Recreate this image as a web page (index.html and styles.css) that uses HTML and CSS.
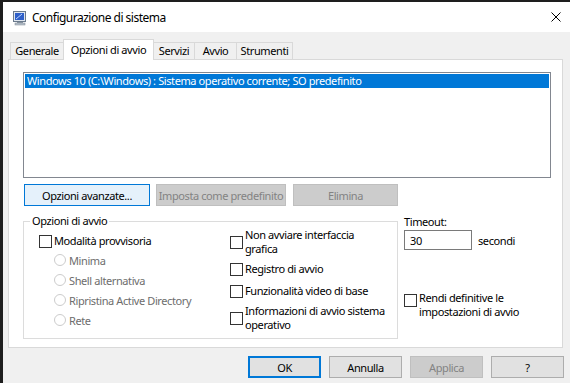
FILE: index.html
```html
<!DOCTYPE html>
<html lang="it">
<head>
  <meta charset="UTF-8">
  <title>Configurazione di sistema</title>
  <link rel="stylesheet" href="styles.css">
</head>
<body>
  <div class="window">
    <div class="titlebar">
      <svg class="app-icon" width="16" height="16" viewBox="0 0 16 16">
        <rect x="1.5" y="1.5" width="12" height="10" fill="#dfe6ee" stroke="#6b7a8c"/>
        <rect x="3" y="3" width="9" height="7" fill="#2f5fc8"/>
        <path d="M4 9 L10 4" stroke="#bcd4ff" stroke-width="1"/>
        <rect x="5" y="12" width="6" height="1" fill="#8a96a3"/>
        <rect x="3" y="13" width="10" height="2" fill="#b9c2cc" stroke="#7d8895" stroke-width="0.5"/>
      </svg>
      <span class="title">Configurazione di sistema</span>
      <svg class="close" width="10" height="10" viewBox="0 0 10 10">
        <path d="M0.5 0.5 L9.5 9.5 M9.5 0.5 L0.5 9.5" stroke="#000" stroke-width="1"/>
      </svg>
    </div>

    <div class="tabs">
      <div class="tab tab-generale">Generale</div>
      <div class="tab tab-active">Opzioni di avvio</div>
      <div class="tab tab-servizi">Servizi</div>
      <div class="tab tab-avvio">Avvio</div>
      <div class="tab tab-strumenti">Strumenti</div>
    </div>

    <div class="panel">
      <div class="listbox">
        <div class="list-item selected">Windows 10 (C:\Windows) : Sistema operativo corrente; SO predefinito</div>
      </div>

      <div class="list-buttons">
        <button class="btn btn-hot btn-advanced">Opzioni avanzate...</button>
        <button class="btn btn-default" disabled>Imposta come predefinito</button>
        <button class="btn btn-delete" disabled>Elimina</button>
      </div>

      <div class="lower">
        <fieldset class="group">
          <legend>Opzioni di avvio</legend>
          <div class="group-cols">
            <div class="col-left">
              <label class="check"><span class="box"></span>Modalità provvisoria</label>
              <div class="radios">
                <label class="radio"><span class="dot"></span>Minima</label>
                <label class="radio"><span class="dot"></span>Shell alternativa</label>
                <label class="radio"><span class="dot"></span>Ripristina Active Directory</label>
                <label class="radio"><span class="dot"></span>Rete</label>
              </div>
            </div>
            <div class="col-right">
              <label class="check multi r1"><span class="box"></span><span>Non avviare interfaccia<br>grafica</span></label>
              <label class="check r2"><span class="box"></span>Registro di avvio</label>
              <label class="check r3"><span class="box"></span>Funzionalità video di base</label>
              <label class="check multi r4"><span class="box"></span><span>Informazioni di avvio sistema<br>operativo</span></label>
            </div>
          </div>
        </fieldset>

        <div class="side">
          <div class="timeout-label">Timeout:</div>
          <div class="timeout-row">
            <input class="timeout-input" type="text" value="30">
            <span>secondi</span>
          </div>
          <label class="check multi persist"><span class="box"></span><span>Rendi definitive le<br>impostazioni di avvio</span></label>
        </div>
      </div>
    </div>

    <div class="dialog-buttons">
      <button class="btn btn-ok">OK</button>
      <button class="btn">Annulla</button>
      <button class="btn" disabled>Applica</button>
      <button class="btn">?</button>
    </div>
  </div>
</body>
</html>
```

FILE: styles.css
```css
body {
  margin: 0;
  background: #1e1e1e;
  font-family: "Noto Sans", sans-serif;
  font-size: 11px;
  letter-spacing: -0.4px;
  color: #000;
  overflow: hidden;
}
.window {
  margin: 2px 0 0 3px;
  height: 381px;
  background: #f0f0f0;
}
.titlebar {
  height: 30px;
  background: #fff;
  display: flex;
  align-items: center;
}
.app-icon {
  margin-left: 9px;
  margin-top: 1px;
}
.title {
  margin-left: 4px;
  font-size: 12px;
  letter-spacing: -0.5px;
  flex: 1;
}
.close {
  margin-right: 9px;
}

/* tabs */
.tabs {
  display: flex;
  align-items: flex-end;
  height: 20px;
  margin: 7px 0 0 7px;
  position: relative;
  z-index: 1;
}
.tab {
  height: 17px;
  line-height: 16px;
  box-sizing: border-box;
  border: 1px solid #d9d9d9;
  border-bottom: none;
  margin-right: -1px;
  text-align: center;
  background: #f0f0f0;
}
.tab-generale { width: 54px; }
.tab-active {
  width: 91px;
  height: 21px;
  line-height: 19px;
  background: #fff;
  margin-bottom: -1px;
  position: relative;
}
.tab-servizi { width: 42px; }
.tab-avvio { width: 43px; }
.tab-strumenti { width: 57px; }

/* panel */
.panel {
  margin-left: 5px;
  width: 555px;
  height: 289px;
  box-sizing: border-box;
  border: 1px solid #d9d9d9;
  background: #fff;
  padding: 12px 0 0 14px;
}
.listbox {
  width: 528px;
  height: 106px;
  box-sizing: border-box;
  border: 1px solid #828790;
  padding: 1px;
}
.list-item {
  height: 14px;
  line-height: 14px;
  padding-left: 2px;
  white-space: nowrap;
}
.list-item.selected {
  background: #0078d7;
  color: #fff;
}
.list-buttons {
  display: flex;
  gap: 6px;
  margin: 6px 0 0 1px;
}
.btn {
  height: 22px;
  box-sizing: border-box;
  border: 1px solid #adadad;
  background: #e1e1e1;
  font: inherit;
  letter-spacing: inherit;
  color: #000;
  padding: 0;
  white-space: nowrap;
}
.btn:disabled {
  background: #cccccc;
  border-color: #bfbfbf;
  color: #838383;
}
.btn-hot {
  background: #e5f1fb;
  border-color: #0078d7;
}
.btn-advanced { width: 126px; }
.btn-default { width: 130px; }
.btn-delete { width: 105px; margin-left: 1px; }

/* lower area */
.lower {
  display: flex;
  gap: 6px;
  margin-top: 8px;
}
.group {
  width: 375px;
  height: 125px;
  box-sizing: border-box;
  margin: 0;
  border: 1px solid #dcdcdc;
  padding: 1px 0 0 15px;
}
.group legend {
  padding: 0 2px;
  margin-left: -9px;
  line-height: 14px;
}
.group-cols {
  display: flex;
}
.col-left {
  width: 191px;
  padding-top: 5px;
}
.col-right {
  display: flex;
  flex-direction: column;
}
.check {
  display: flex;
  align-items: center;
  height: 14px;
  line-height: 14px;
  white-space: nowrap;
}
.check .box {
  width: 13px;
  height: 13px;
  box-sizing: border-box;
  border: 1px solid #333;
  background: #fff;
  margin-right: 2px;
  flex: none;
}
.check.multi {
  height: auto;
  line-height: 14px;
}
.r1 { margin-top: -1px; }
.r2 { margin-top: 6px; }
.r3 { margin-top: 8px; }
.r4 { margin-top: 6px; }
.radios {
  display: flex;
  flex-direction: column;
  gap: 6px;
  margin: 5px 0 0 15px;
}
.radio {
  display: flex;
  align-items: center;
  height: 14px;
  color: #6d6d6d;
}
.radio .dot {
  width: 12px;
  height: 12px;
  box-sizing: border-box;
  border: 1px solid #cccccc;
  border-radius: 50%;
  background: #fff;
  margin-right: 3px;
}

/* side column */
.side {
  padding-top: 1px;
}
.timeout-label {
  line-height: 14px;
}
.timeout-row {
  display: flex;
  align-items: center;
  gap: 6px;
  margin-top: 1px;
}
.timeout-input {
  width: 68px;
  height: 20px;
  box-sizing: border-box;
  border: 1px solid #7a7a7a;
  padding: 0 0 0 5px;
  font: inherit;
  letter-spacing: inherit;
  background: #fff;
}
.persist {
  margin-top: 41px;
  align-items: flex-start;
}
.persist .box {
  margin-top: 3px;
}

/* bottom buttons */
.dialog-buttons {
  display: flex;
  justify-content: flex-end;
  gap: 8px;
  margin-top: 8px;
  padding-right: 6px;
}
.dialog-buttons .btn {
  width: 73px;
}
.btn-ok {
  border: 2px solid #0078d7;
}
```
